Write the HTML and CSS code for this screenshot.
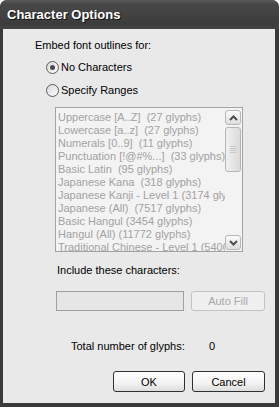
FILE: index.html
```html
<!DOCTYPE html>
<html lang="en">
<head>
    <meta charset="UTF-8">
    <title>Character Options</title>
    <link rel="stylesheet" href="styles.css">
</head>
<body>
    <div class="window">
        <div class="titlebar">Character Options</div>
        <div class="content">
            <div class="label embed">Embed font outlines for:</div>

            <div class="radios">
                <div class="radio-row">
                    <span class="radio checked"></span>
                    <span>No Characters</span>
                </div>
                <div class="radio-row">
                    <span class="radio"></span>
                    <span>Specify Ranges</span>
                </div>
            </div>

            <div class="listbox">
                <div class="items">
                    <div>Uppercase [A..Z]&nbsp; (27 glyphs)</div>
                    <div>Lowercase [a..z]&nbsp; (27 glyphs)</div>
                    <div>Numerals [0..9]&nbsp; (11 glyphs)</div>
                    <div>Punctuation [!@#%...]&nbsp; (33 glyphs)</div>
                    <div>Basic Latin&nbsp; (95 glyphs)</div>
                    <div>Japanese Kana&nbsp; (318 glyphs)</div>
                    <div>Japanese Kanji - Level 1 (3174 glyphs)</div>
                    <div>Japanese (All)&nbsp; (7517 glyphs)</div>
                    <div>Basic Hangul (3454 glyphs)</div>
                    <div>Hangul (All) (11772 glyphs)</div>
                    <div>Traditional Chinese - Level 1 (5400 glyphs)</div>
                </div>
                <div class="scrollbar">
                    <div class="sb-btn">
                        <svg width="9" height="6" viewBox="0 0 9 6"><path d="M1 5 L4.5 1.5 L8 5" fill="none" stroke="#4d4d4d" stroke-width="2"/></svg>
                    </div>
                    <div class="sb-thumb">
                        <span></span><span></span><span></span><span></span>
                    </div>
                    <div class="sb-track"></div>
                    <div class="sb-btn">
                        <svg width="9" height="6" viewBox="0 0 9 6"><path d="M1 1 L4.5 4.5 L8 1" fill="none" stroke="#4d4d4d" stroke-width="2"/></svg>
                    </div>
                </div>
            </div>

            <div class="label include">Include these characters:</div>
            <div class="include-row">
                <div class="textbox"></div>
                <div class="button disabled">Auto Fill</div>
            </div>

            <div class="total-row">
                <span class="total-label">Total number of glyphs:</span>
                <span>0</span>
            </div>

            <div class="buttons">
                <div class="button ok">OK</div>
                <div class="button cancel">Cancel</div>
            </div>
        </div>
    </div>
</body>
</html>
```

FILE: styles.css
```css
body {
    margin: 0;
    background: #ffffff;
    font-family: 'Liberation Sans', Arial, sans-serif;
    font-size: 11px;
    color: #000;
}
.window {
    width: 279px;
    height: 407px;
    background: #3a3a3a;
    border-radius: 7px 7px 0 0;
    display: flex;
    flex-direction: column;
}
.titlebar {
    height: 29px;
    flex: none;
    box-sizing: border-box;
    padding: 7px 0 0 7px;
    color: #fff;
    font-weight: bold;
    font-size: 13px;
    text-shadow: 1px 1px 0 #111;
    background: linear-gradient(#5a5a5a, #484848 4px, #3c3c3c 24px, #444 29px);
    border-radius: 7px 7px 0 0;
}
.content {
    flex: 1;
    margin: 0 4px 4px 3px;
    background: #e9e9e9;
    padding-top: 10px;
}
.label {
    line-height: 13px;
}
.embed {
    padding-left: 32px;
}
.radios {
    margin-top: 9px;
    padding-left: 43px;
}
.radio-row {
    height: 23px;
    display: flex;
    align-items: flex-start;
    gap: 2px;
    line-height: 13px;
}
.radio {
    width: 11px;
    height: 11px;
    border: 1px solid #5c5c5c;
    border-radius: 50%;
    background: linear-gradient(135deg, #dcdcdc, #fafafa);
    position: relative;
}
.radio.checked::after {
    content: '';
    position: absolute;
    left: 3px;
    top: 3px;
    width: 5px;
    height: 5px;
    border-radius: 50%;
    background: #4a4a4a;
}
.listbox {
    margin: 0 0 0 52px;
    width: 188px;
    height: 145px;
    box-sizing: border-box;
    border: 1px solid #a3a3a3;
    background: #f3f3f3;
    display: flex;
    overflow: hidden;
}
.items {
    flex: 1;
    min-width: 0;
    padding: 3px 0 0 2px;
    color: #a2a2a2;
    line-height: 13px;
    white-space: nowrap;
    overflow: hidden;
}
.scrollbar {
    width: 16px;
    flex: none;
    display: flex;
    flex-direction: column;
    padding: 2px 1px 1px 0;
    gap: 2px;
}
.sb-btn {
    height: 13px;
    border: 1px solid #b8b8b8;
    border-radius: 3px;
    background: linear-gradient(#fbfbfb, #dedede);
    display: flex;
    align-items: center;
    justify-content: center;
}
.sb-thumb {
    height: 43px;
    border: 1px solid #b5b5b5;
    border-radius: 3px;
    background: linear-gradient(90deg, #f0f0f0, #dadada);
    display: flex;
    flex-direction: column;
    align-items: center;
    justify-content: center;
    gap: 1px;
}
.sb-thumb span {
    width: 6px;
    height: 1px;
    background: #c8c8c8;
}
.sb-track {
    flex: 1;
}
.include {
    margin-top: 12px;
    padding-left: 54px;
}
.include-row {
    margin-top: 14px;
    padding-left: 53px;
    display: flex;
    gap: 7px;
}
.textbox {
    width: 128px;
    height: 20px;
    box-sizing: border-box;
    border: 1px solid #a0a0a0;
    background: #e6e6e6;
}
.button {
    height: 20px;
    box-sizing: border-box;
    border: 1px solid #303030;
    border-radius: 3px;
    background: linear-gradient(#ffffff, #f2f2f2 60%, #dcdcdc);
    display: flex;
    align-items: center;
    justify-content: center;
}
.button.disabled {
    width: 74px;
    border-color: #c3c3c3;
    background: #f0f0f0;
    color: #a8a8a8;
}
.total-row {
    margin-top: 29px;
    padding-left: 68px;
    line-height: 13px;
    display: flex;
}
.total-label {
    width: 138px;
}
.buttons {
    margin-top: 18px;
    padding-left: 110px;
    display: flex;
    gap: 7px;
}
.button.ok {
    width: 72px;
    height: 21px;
}
.button.cancel {
    width: 73px;
    height: 21px;
}
```
